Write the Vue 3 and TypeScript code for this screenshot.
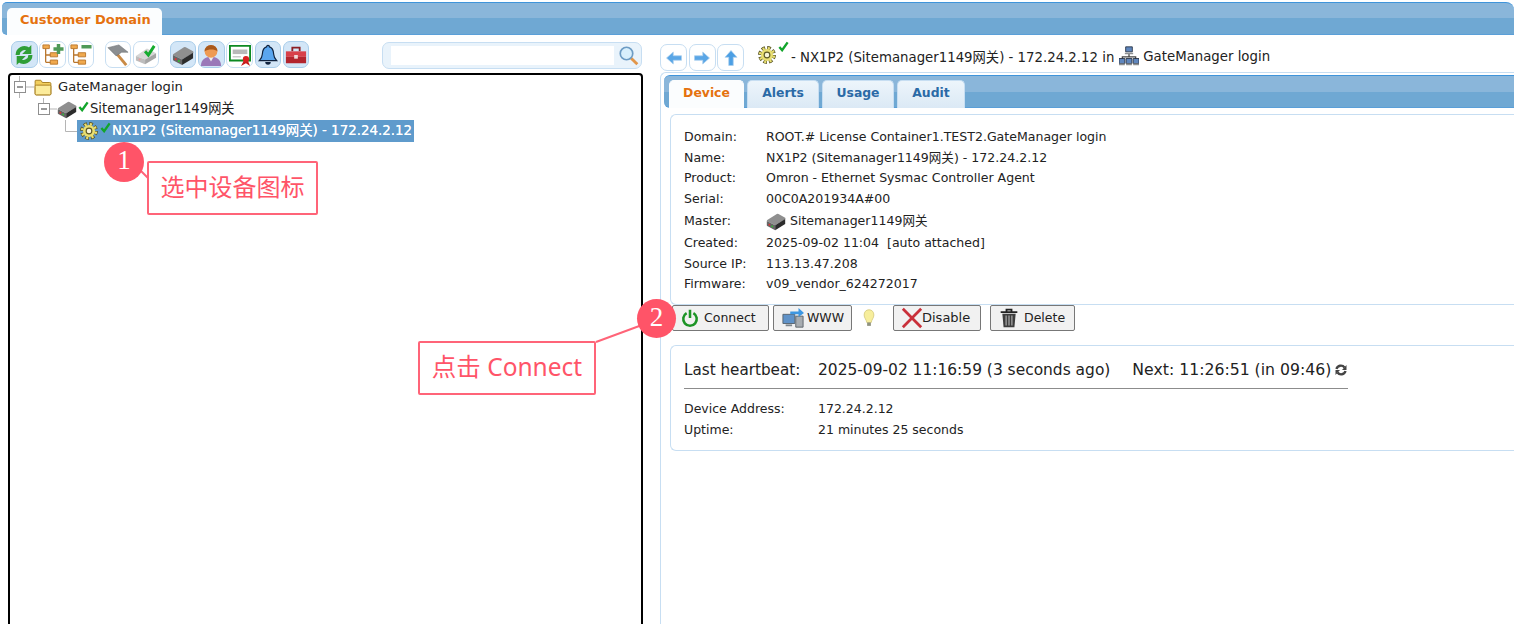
<script setup lang="ts">
const leftTools = [
  [{ icon: 'refresh', on: true }, { icon: 'tree-add' }, { icon: 'tree-del' }],
  [{ icon: 'pick' }, { icon: 'device-ok' }],
  [{ icon: 'device', on: true }, { icon: 'user', on: true }, { icon: 'cert' }, { icon: 'bell', on: true }, { icon: 'toolbox', on: true }],
]
const navIcons = ['arrow-left', 'arrow-right', 'arrow-up']
const tabs = ['Device', 'Alerts', 'Usage', 'Audit']
const info = [
  { label: 'Domain:', value: 'ROOT.# License Container1.TEST2.GateManager login' },
  { label: 'Name:', value: 'NX1P2 (Sitemanager1149网关) - 172.24.2.12' },
  { label: 'Product:', value: 'Omron - Ethernet Sysmac Controller Agent' },
  { label: 'Serial:', value: '00C0A201934A#00' },
  { label: 'Master:', value: 'Sitemanager1149网关', icon: 'device' },
  { label: 'Created:', value: '2025-09-02 11:04  [auto attached]' },
  { label: 'Source IP:', value: '113.13.47.208' },
  { label: 'Firmware:', value: 'v09_vendor_624272017' },
]
</script>

<template>
  <div class="page">
    <!-- shared icons -->
    <svg class="defs" aria-hidden="true">
      <defs>
        <symbol id="check" viewBox="0 0 12 12"><path d="M1.5 6.5 4.5 10 10.5 1.5" fill="none" stroke="#12a52b" stroke-width="2.6" /></symbol>
        <symbol id="gear" viewBox="0 0 24 24">
          <circle cx="12" cy="12" r="9.2" fill="none" stroke="#5c5826" stroke-width="5.4" stroke-dasharray="4.6 2.62" />
          <circle cx="12" cy="12" r="9.2" fill="none" stroke="#e9df72" stroke-width="3.4" stroke-dasharray="2.8 4.42" stroke-dashoffset="-0.9" />
          <circle cx="12" cy="12" r="8" fill="#e9df72" />
          <circle cx="12" cy="12" r="3.8" fill="#f8f6d8" stroke="#5c5826" stroke-width="1.5" />
        </symbol>
        <symbol id="device" viewBox="0 0 24 24">
          <path d="M1 12Q1 11 2 10.500L13 3.500Q14 3 15 3.500L23 8Q24 9 23 10L11 17Z" fill="#8f8f8f" />
          <path d="M1 12l10 5v6L1.500 18Q1 17.500 1 17z" fill="#666" />
          <path d="M11 17l12-7.500v6L11 23z" fill="#2c2c2c" />
          <circle cx="4" cy="16.500" r="1.100" fill="#d33" /><circle cx="7.500" cy="18.500" r="1.100" fill="#3b3" />
        </symbol>
        <symbol id="device-ok" viewBox="0 0 24 24">
          <path d="M1 13 13 5l10 5-12 7z" fill="#d6d6d6" />
          <path d="M1 13l10 4v5L1 18z" fill="#bdbdbd" />
          <path d="M11 17l12-7v5l-12 7z" fill="#a5a5a5" />
          <circle cx="5" cy="17" r="1.100" fill="#e99" />
          <path d="M11 8l3.500 4L21 2" fill="none" stroke="#15ab2f" stroke-width="3.200" />
        </symbol>
        <symbol id="refresh" viewBox="0 0 24 24">
          <path d="M5 12a7.500 7.500 0 0 1 12-6" fill="none" stroke="#2f9e37" stroke-width="4.400" />
          <path d="M20 1v10h-10z" fill="#2f9e37" />
          <path d="M19 12a7.500 7.500 0 0 1-12 6" fill="none" stroke="#2f9e37" stroke-width="4.400" />
          <path d="M4 23V13h10z" fill="#2f9e37" />
        </symbol>
        <symbol id="tree-add" viewBox="0 0 24 24">
          <path d="M4 5v15M4 12h6M4 20h6" fill="none" stroke="#b9762c" stroke-width="1.400" />
          <path d="M1 1h7v4H1zM9 9.500h8v4.500H9zM9 17.500h8V22H9z" fill="#f0a94e" stroke="#b9762c" />
          <path d="M18 0v11M12.500 5.500h11" stroke="#4f9a58" stroke-width="3.800" />
        </symbol>
        <symbol id="tree-del" viewBox="0 0 24 24">
          <path d="M4 5v15M4 12h6M4 20h6" fill="none" stroke="#b9762c" stroke-width="1.400" />
          <path d="M1 1h7v4H1zM9 9.500h8v4.500H9zM9 17.500h8V22H9z" fill="#f0a94e" stroke="#b9762c" />
          <path d="M12.500 3h11" stroke="#4f9a58" stroke-width="3.800" />
        </symbol>
        <symbol id="pick" viewBox="0 0 24 24">
          <path d="M11 11 21 23" stroke="#c98a45" stroke-width="3.200" />
          <path d="M1 4 13 1l10 8-7 0-6 4z" fill="#8b8e91" stroke="#6b6e71" stroke-width=".6" />
        </symbol>
        <symbol id="user" viewBox="0 0 24 24">
          <path d="M1 24c0-7 5-10 11-10s11 3 11 10z" fill="#9a78b8" />
          <path d="M9 14l3 5 3-5z" fill="#eee" />
          <circle cx="12" cy="8" r="7" fill="#ee9a52" />
          <path d="M5 8a7 7 0 0 1 14 0c-3-2.500-10-2.500-14 0z" fill="#a9591d" />
        </symbol>
        <symbol id="cert" viewBox="0 0 24 24">
          <path d="M1 2h22v16H1z" fill="#fff" stroke="#0d8a22" stroke-width="2" />
          <path d="M4 6h16v5H4z" fill="#b9b9b9" />
          <path d="M4 14h9" stroke="#aaa" />
          <path d="M13 24l4-7h3l3 7-4.500-3z" fill="#c61a1a" />
          <circle cx="18.500" cy="16.500" r="3.400" fill="#d92020" />
        </symbol>
        <symbol id="bell" viewBox="0 0 24 24">
          <path d="M12 1.500c1 0 1.600.7 1.600 1.700 3.500 1 4.400 4 4.600 8 .2 3.500 1.300 5 3.300 7H2.500c2-2 3.100-3.500 3.300-7 .2-4 1.100-7 4.600-8 0-1 .6-1.700 1.600-1.700z" fill="#5aa6ef" stroke="#10233f" stroke-width="1.300" />
          <path d="M9 19.500a3 3 0 0 0 6 0z" fill="#10233f" />
        </symbol>
        <symbol id="toolbox" viewBox="0 0 24 24">
          <path d="M8 8V4h8v4" fill="none" stroke="#8c1f24" stroke-width="2" />
          <path d="M1 8h22v6H1z" fill="#d8404a" />
          <path d="M1 14h22v7H1z" fill="#b3252e" />
          <path d="M10 12h4v4h-4z" fill="#f0d9d9" />
        </symbol>
        <symbol id="search" viewBox="0 0 24 24">
          <path d="M14 14l8 8" stroke="#e2964a" stroke-width="3.400" />
          <circle cx="9" cy="9" r="7.500" fill="#d8effc" stroke="#6d9cc4" stroke-width="2" />
        </symbol>
        <symbol id="arrow-left" viewBox="0 0 24 24"><path d="M2 12l9-8v5h11v6H11v5z" fill="#5aa6e6" stroke="#a9cfee" /></symbol>
        <symbol id="arrow-right" viewBox="0 0 24 24"><path d="M22 12l-9-8v5H2v6h11v5z" fill="#5aa6e6" stroke="#a9cfee" /></symbol>
        <symbol id="arrow-up" viewBox="0 0 24 24"><path d="M12 2l8 9h-5v11H9V11H4z" fill="#4c9fe4" stroke="#a9cfee" /></symbol>
        <symbol id="folder" viewBox="0 0 24 24">
          <path d="M1.500 7V4q0-1 1-1h6q1 0 1.500 1l1 2h10q1.500 0 1.500 1.500V21q0 1.500-1.500 1.500h-18Q1.500 22.500 1.500 21z" fill="#f2cf5e" stroke="#a98124" stroke-width="1.300" />
          <path d="M1.500 11q0-1.500 1.500-1.500h18q1.500 0 1.500 1.500V21q0 1.500-1.500 1.500H3Q1.500 22.500 1.500 21z" fill="#fcec9c" stroke="#a98124" stroke-width="1.300" />
        </symbol>
        <symbol id="network" viewBox="0 0 24 24">
          <path d="M12 9v4M4 16v-3h16v3" fill="none" stroke="#444" stroke-width="1.500" />
          <path d="M8 1h8v6H8zM0 15h7v6H0zM17 15h7v6h-7zM8.500 15h7v6h-7z" fill="#5f86bd" stroke="#222c3f" />
          <path d="M7 8h10v2H7zM0 21h7v2H0zM17 21h7v2h-7zM8.500 21h7v2h-7z" fill="#8d9092" />
        </symbol>
        <symbol id="power" viewBox="0 0 24 24">
          <path d="M7.500 5.500a9 9 0 1 0 9 0" fill="none" stroke="#1c9426" stroke-width="3.400" />
          <path d="M12 1v11" stroke="#1c9426" stroke-width="3.400" />
        </symbol>
        <symbol id="www" viewBox="0 0 24 24">
          <path d="M1 8h13v10H1z" fill="#5f92c8" stroke="#53606c" />
          <path d="M15 10h8v12h-8z" fill="#a8adb1" stroke="#5b6268" />
          <path d="M9 5h9V1l6 5.500-6 4.500V8H9z" fill="#3d97e2" />
          <path d="M4 19h7v2H4z" fill="#7c858c" />
        </symbol>
        <symbol id="bulb" viewBox="0 0 24 24">
          <path d="M12 1c4 0 6.500 3 6.500 7 0 4-3 6-3.500 10H9c-.5-4-3.500-6-3.500-10 0-4 2.500-7 6.500-7z" fill="#f7ee9c" stroke="#d2c678" />
          <path d="M9.500 18h5v4.500h-5z" fill="#8f927f" />
        </symbol>
        <symbol id="cross" viewBox="0 0 24 24"><path d="M2 2l20 20M22 2 2 22" stroke="#c9303a" stroke-width="3" /></symbol>
        <symbol id="trash" viewBox="0 0 24 24">
          <path d="M2 5h20M9 5V2h6v3" fill="none" stroke="#222" stroke-width="2.200" />
          <path d="M4 7h16l-1.500 16h-13z" fill="#3d3d3d" />
          <path d="M8.500 9v12M12 9v12M15.500 9v12" stroke="#ddd" />
        </symbol>
        <symbol id="reload" viewBox="0 0 12 12">
          <path d="M1.500 5a4.500 4.500 0 0 1 8-1.500M10.500 7a4.500 4.500 0 0 1-8 1.500" fill="none" stroke="#444" stroke-width="2.400" />
          <path d="M11.500 1v5H7zM.5 11V6h4.500z" fill="#444" />
        </symbol>
      </defs>
    </svg>

    <div class="domain-bar">
      <div class="domain-tab">Customer Domain</div>
    </div>

    <div class="columns">
      <section class="left">
        <div class="left-top">
          <div class="tool-groups">
            <div v-for="(group, g) in leftTools" :key="g" class="tool-group">
              <button v-for="tool in group" :key="tool.icon" class="tool" :class="{ on: tool.on }">
                <svg class="ic-22"><use :href="'#' + tool.icon" /></svg>
              </button>
            </div>
          </div>
          <div class="search">
            <input class="search-input" type="text" />
            <svg class="ic-20 search-icon"><use href="#search" /></svg>
          </div>
        </div>

        <div class="tree">
          <div class="node node-root">
            <svg class="twig" width="21" height="22">
              <path d="M6.500 0v5M6.500 17v5M13 11h8" stroke="#b5b5b5" fill="none" />
              <rect x="1.500" y="5.500" width="11" height="11" fill="#fff" stroke="#8f8f8f" />
              <path d="M4 11h6" stroke="#333" />
            </svg>
            <svg class="ic-18"><use href="#folder" /></svg>
            <span class="label first">GateManager login</span>
          </div>
          <div class="node node-site">
            <svg class="twig" width="20" height="22">
              <path d="M6.500 0v5M13 11h7" stroke="#b5b5b5" fill="none" />
              <rect x="1.500" y="5.500" width="11" height="11" fill="#fff" stroke="#8f8f8f" />
              <path d="M4 11h6" stroke="#333" />
            </svg>
            <svg class="ic-20"><use href="#device" /></svg>
            <svg class="tick tick-site"><use href="#check" /></svg>
            <span class="label site-label">Sitemanager1149网关</span>
          </div>
          <div class="node node-dev">
            <svg class="twig" width="13" height="22">
              <path d="M1.500 0v11.500H13" stroke="#b5b5b5" fill="none" />
            </svg>
            <div class="selected">
              <svg class="ic-18"><use href="#gear" /></svg>
              <svg class="tick tick-dev"><use href="#check" /></svg>
              <span class="label sel-label">NX1P2 (Sitemanager1149网关) - 172.24.2.12</span>
            </div>
          </div>
        </div>
      </section>

      <section class="right">
        <div class="crumbs">
          <div class="nav-btns">
            <button v-for="name in navIcons" :key="name" class="tool nav">
              <svg class="ic-18"><use :href="'#' + name" /></svg>
            </button>
          </div>
          <svg class="ic-18 crumb-gear"><use href="#gear" /></svg>
          <svg class="tick crumb-tick"><use href="#check" /></svg>
          <span class="crumb-text">- NX1P2 (Sitemanager1149网关) - 172.24.2.12 in</span>
          <svg class="ic-20 crumb-net"><use href="#network" /></svg>
          <span class="crumb-text">GateManager login</span>
        </div>

        <div class="panel">
          <div class="tabs">
            <div v-for="(tab, i) in tabs" :key="tab" class="tab" :class="{ active: i === 0 }">{{ tab }}</div>
          </div>

          <div class="card info-card">
            <div v-for="row in info" :key="row.label" class="info-row" :class="{ master: row.icon }">
              <span class="info-label">{{ row.label }}</span>
              <span class="info-value">
                <svg v-if="row.icon" class="ic-20 master-icon"><use :href="'#' + row.icon" /></svg>{{ row.value }}
              </span>
            </div>
          </div>

          <div class="actions">
            <button class="act act-connect"><svg class="ic-18"><use href="#power" /></svg><span>Connect</span></button>
            <button class="act act-www"><svg class="ic-22"><use href="#www" /></svg><span>WWW</span></button>
            <svg class="ic-18 bulb"><use href="#bulb" /></svg>
            <button class="act act-disable"><svg class="ic-22"><use href="#cross" /></svg><span>Disable</span></button>
            <button class="act act-delete"><svg class="ic-20"><use href="#trash" /></svg><span>Delete</span></button>
          </div>

          <div class="card beat-card">
            <div class="beat">
              <span class="beat-label">Last heartbeat:</span>
              <span class="beat-when">2025-09-02 11:16:59 (3 seconds ago)</span>
              <span class="beat-next">Next: 11:26:51 (in 09:46)</span>
              <svg class="beat-reload"><use href="#reload" /></svg>
            </div>
            <div class="beat-row"><span>Device Address:</span><span>172.24.2.12</span></div>
            <div class="beat-row"><span>Uptime:</span><span>21 minutes 25 seconds</span></div>
          </div>
        </div>
      </section>
    </div>

    <!-- annotations pasted over the screenshot -->
    <svg class="leaders" width="1514" height="624">
      <path d="M140 170 148 178M596 342 642 325" stroke="#ff6478" stroke-width="2" fill="none" />
    </svg>
    <div class="badge badge-1">1</div>
    <div class="badge badge-2">2</div>
    <div class="callout callout-1">选中设备图标</div>
    <div class="callout callout-2">点击 Connect</div>
  </div>
</template>

<style>
html,
body {
  margin: 0;
  background: #fff;
}
</style>

<style scoped>
.page {
  position: relative;
  width: 1514px;
  height: 624px;
  overflow: hidden;
  background: #fff;
  color: #222;
  font-family: "DejaVu Sans", "Noto Sans CJK SC", sans-serif;
  font-size: 13px;
}

.defs {
  position: absolute;
  width: 0;
  height: 0;
}

.ic-18 { width: 18px; height: 18px; flex: none; }
.ic-20 { width: 20px; height: 20px; flex: none; }
.ic-22 { width: 22px; height: 22px; flex: none; }

.tick {
  width: 11px;
  height: 11px;
  flex: none;
  align-self: flex-start;
}

/* top blue band */
.domain-bar {
  height: 33px;
  margin: 2px 0 0 2px;
  padding-left: 5px;
  box-sizing: border-box;
  display: flex;
  align-items: flex-end;
  border-top: 1px solid #3f94da;
  border-bottom: 1px solid #5a9fd8;
  border-radius: 5px 8px 0 5px;
  background: linear-gradient(#8ab6da 0 50%, #6fa8d3 50% 100%);
}

.domain-tab {
  width: 155px;
  height: 27px;
  margin-bottom: -1px;
  line-height: 24px;
  padding-left: 13px;
  box-sizing: border-box;
  border-radius: 5px 5px 0 0;
  background: #fbfdfe;
  color: #e5720f;
  font-weight: 700;
  font-size: 13px;
}

.columns {
  display: flex;
  height: 589px;
}

.left {
  width: 660px;
  flex: none;
  padding: 6px 0 0 8px;
  box-sizing: border-box;
}

.left-top {
  display: flex;
  justify-content: space-between;
  width: 634px;
  height: 32px;
}

.tool-groups {
  display: flex;
  padding-left: 3px;
  gap: 10.5px;
}

.tool-group {
  display: flex;
  gap: 1.75px;
}

.tool {
  width: 26.5px;
  height: 27px;
  padding: 0;
  display: flex;
  align-items: center;
  justify-content: center;
  box-sizing: border-box;
  background: #fff;
  border: 1px solid #c7def2;
  border-radius: 7px;
}

.tool.on {
  background: #d3e6f7;
  border-color: #a9cdea;
}

.search {
  width: 260px;
  height: 27px;
  margin-top: 1px;
  padding-left: 8px;
  display: flex;
  align-items: center;
  box-sizing: border-box;
  background: #e9f3fb;
  border: 1px solid #c7def2;
  border-radius: 7px;
}

.search-input {
  width: 223px;
  height: 19px;
  padding: 0;
  box-sizing: border-box;
  background: #fff;
  border: none;
  outline: none;
}

.search-icon {
  margin-left: 5px;
}

.tree {
  width: 635px;
  height: 560px;
  box-sizing: border-box;
  padding-top: 1px;
  border: 2px solid #000;
  border-radius: 4px 4px 0 0;
}

.node {
  display: flex;
  align-items: center;
  height: 22px;
}

.node-root { padding-left: 3px; }
.node-site { padding-left: 27px; }
.node-dev { padding-left: 54px; }

.twig {
  flex: none;
}

.label {
  white-space: nowrap;
  line-height: 22px;
}

.first { margin-left: 6px; font-size: 13.1px; }

.tick-site { margin: 3px 0 0 1px; }
.site-label { margin-left: 1px; font-size: 13.2px; }

.selected {
  display: flex;
  align-items: center;
  width: 337px;
  height: 22px;
  padding-left: 3px;
  box-sizing: border-box;
  background: #5f9bcc;
}

.tick-dev { margin: 2px 0 0 2px; }

.sel-label {
  margin-left: 1px;
  color: #fff;
  font-size: 13.4px;
  text-shadow: 0 0 .6px #fff;
}

.right {
  flex: 1;
  min-width: 0;
  padding-top: 9px;
}

.crumbs {
  display: flex;
  align-items: center;
  height: 27px;
  margin-bottom: 1px;
}

.nav-btns {
  display: flex;
  gap: 1.5px;
  margin-right: 14px;
}

.tool.nav {
  width: 27px;
}

.crumb-gear {
  margin-top: -6px;
}

.crumb-tick {
  margin: -3px 2px 0 2px;
}

.crumb-text {
  margin-top: -3px;
  font-size: 13.3px;
  white-space: nowrap;
}

.crumb-net {
  margin: -3px 4px 0 5px;
}

.panel {
  height: 560px;
  padding: 2px 0 0 3px;
  box-sizing: border-box;
  border-left: 1px solid #c7def2;
  border-top: 1px solid #c7def2;
  border-top-left-radius: 6px;
}

.tabs {
  height: 33px;
  padding-left: 5px;
  display: flex;
  align-items: flex-end;
  gap: 3px;
  box-sizing: border-box;
  border-top: 1px solid #3f94da;
  border-bottom: 1px solid #5a9fd8;
  border-radius: 6px 0 0 6px;
  background: linear-gradient(#8ab6da 0 50%, #6fa8d3 50% 100%);
}

.tab {
  width: 72px;
  height: 28px;
  margin-bottom: -1px;
  line-height: 24px;
  text-align: center;
  box-sizing: border-box;
  font-weight: 700;
  font-size: 12.4px;
  color: #2b6aa6;
  background: linear-gradient(#edf5fb, #dbe9f5);
  border: 1px solid #c7def2;
  border-bottom: none;
  border-radius: 5px 5px 0 0;
}

.tab:last-child {
  width: 68px;
}

.tab.active {
  width: 75px;
  background: #fbfdfe;
  border-color: #fbfdfe;
  color: #e5720f;
}

.card {
  margin-left: 6px;
  box-sizing: border-box;
  border: 1px solid #c7def2;
  border-right: none;
  border-radius: 6px 0 0 6px;
}

.info-card {
  height: 191px;
  margin-top: 6px;
  padding: 12px 0 0 13px;
}

.info-row {
  display: flex;
  height: 20.5px;
  line-height: 20.5px;
  font-size: 12.55px;
}

.info-row.master {
  height: 24px;
  line-height: 24px;
}

.info-label {
  width: 82px;
  flex: none;
}

.info-value {
  display: flex;
  align-items: center;
  white-space: pre;
}

.master-icon {
  margin-right: 4px;
}

.actions {
  display: flex;
  align-items: center;
  height: 27px;
  margin: -1px 0 14px 8px;
}

.act {
  display: flex;
  align-items: center;
  height: 26px;
  padding: 0;
  box-sizing: border-box;
  font: inherit;
  font-size: 12.5px;
  color: #222;
  background: #f1f1f1;
  border: 1px solid #777;
  border-radius: 2px;
}

.act-connect { width: 97px; padding-left: 8px; gap: 5px; }
.act-www { width: 79px; margin-left: 4px; padding-left: 8px; gap: 3px; }
.bulb { margin-left: 8px; }
.act-disable { width: 88px; margin-left: 15px; padding-left: 7px; font-size: 13px; }
.act-disable span { margin-left: -1px; }
.act-delete { width: 85px; margin-left: 9px; padding-left: 8px; gap: 5px; }

.beat-card {
  height: 106px;
  padding: 12px 0 0 13px;
}

.beat {
  display: flex;
  align-items: center;
  width: 664px;
  height: 31px;
  padding-bottom: 7px;
  box-sizing: border-box;
  font-size: 15.2px;
  white-space: nowrap;
  border-bottom: 1px solid #8c8c8c;
}

.beat-label {
  width: 134px;
  flex: none;
}

.beat-when {
  font-size: 15.45px;
}

.beat-next {
  margin-left: 22px;
  font-size: 15.7px;
}

.beat-reload {
  width: 12px;
  height: 12px;
  margin-left: 4px;
}

.beat-row {
  display: flex;
  height: 21px;
  line-height: 21px;
  font-size: 12.5px;
}

.beat-row:nth-child(2) {
  margin-top: 9px;
}

.beat-row span:first-child {
  width: 134px;
}

/* annotations */
.leaders {
  position: absolute;
  left: 0;
  top: 0;
  pointer-events: none;
}

.badge {
  position: absolute;
  border-radius: 50%;
  background: #ff5468;
  color: #fff;
  text-align: center;
  font-family: "Liberation Serif", serif;
  font-size: 27px;
}

.badge-1 {
  left: 104px;
  top: 142px;
  width: 40px;
  height: 40px;
  line-height: 37px;
}

.badge-2 {
  left: 637px;
  top: 299px;
  width: 39px;
  height: 39px;
  line-height: 37px;
}

.callout {
  position: absolute;
  box-sizing: border-box;
  display: flex;
  align-items: center;
  justify-content: center;
  padding-bottom: 5px;
  background: #fff;
  border: 2px solid #ff6478;
  border-radius: 2px;
  color: #ff5468;
  font-family: "Noto Sans", "Noto Sans CJK SC", sans-serif;
  font-size: 24px;
  white-space: nowrap;
}

.callout-1 {
  left: 147px;
  top: 161px;
  width: 171px;
  height: 54px;
}

.callout-2 {
  left: 418px;
  top: 341px;
  width: 178px;
  height: 54px;
  font-size: 24.5px;
}
</style>
